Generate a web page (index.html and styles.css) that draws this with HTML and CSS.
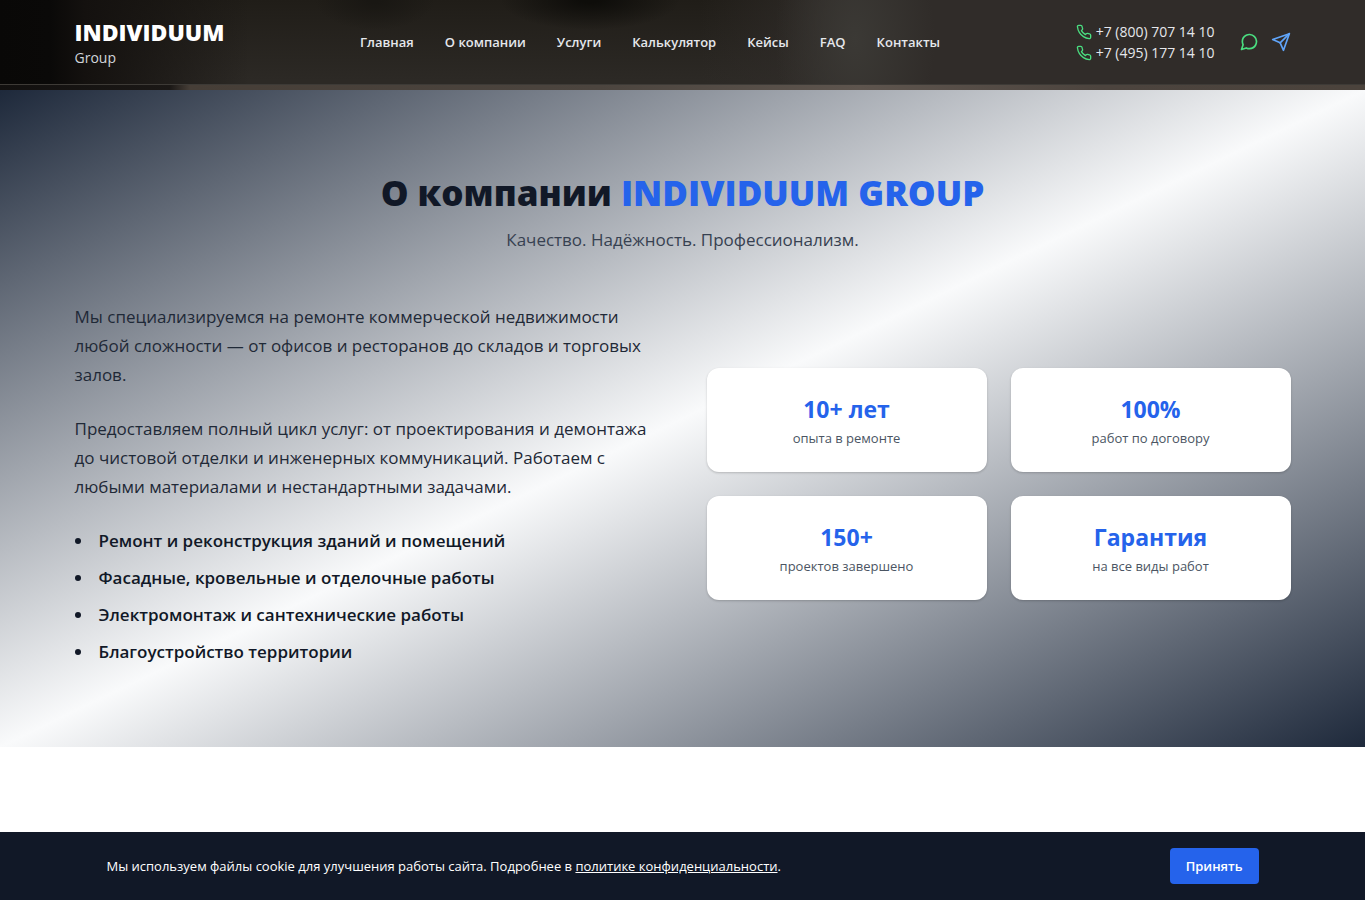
FILE: index.html
```html
<!DOCTYPE html>
<html lang="ru">
<head>
<meta charset="utf-8">
<meta name="viewport" content="width=device-width, initial-scale=1">
<title>INDIVIDUUM Group</title>
<link rel="stylesheet" href="styles.css">
</head>
<body>
<svg class="sprite" aria-hidden="true">
  <symbol id="phone" viewBox="0 0 24 24"><path d="M22 16.92v3a2 2 0 0 1-2.18 2 19.79 19.79 0 0 1-8.63-3.07 19.5 19.5 0 0 1-6-6 19.79 19.79 0 0 1-3.07-8.67A2 2 0 0 1 4.11 2h3a2 2 0 0 1 2 1.72 12.84 12.84 0 0 0 .7 2.81 2 2 0 0 1-.45 2.11L8.09 9.91a16 16 0 0 0 6 6l1.27-1.27a2 2 0 0 1 2.11-.45 12.84 12.84 0 0 0 2.81.7A2 2 0 0 1 22 16.92z"/></symbol>
</svg>
<header class="header">
  <div class="container header-row">
    <a class="logo" href="#"><span class="logo-name">INDIVIDUUM</span><span class="logo-sub">Group</span></a>
    <nav class="nav">
      <a href="#">Главная</a>
      <a href="#about">О компании</a>
      <a href="#">Услуги</a>
      <a href="#">Калькулятор</a>
      <a href="#">Кейсы</a>
      <a href="#">FAQ</a>
      <a href="#">Контакты</a>
    </nav>
    <div class="contacts">
      <div class="phones">
        <a href="tel:+78007071410"><svg class="icon-sm"><use href="#phone"/></svg>+7 (800) 707 14 10</a>
        <a href="tel:+74951771410"><svg class="icon-sm"><use href="#phone"/></svg>+7 (495) 177 14 10</a>
      </div>
      <div class="socials">
        <a class="chat" href="#" aria-label="WhatsApp"><svg class="icon" viewBox="0 0 24 24"><path d="M21 11.5a8.38 8.38 0 0 1-.9 3.8 8.5 8.5 0 0 1-7.6 4.7 8.38 8.38 0 0 1-3.8-.9L3 21l1.9-5.7a8.38 8.38 0 0 1-.9-3.8 8.5 8.5 0 0 1 4.7-7.6 8.38 8.38 0 0 1 3.8-.9h.5a8.48 8.48 0 0 1 8 8v.5z"/></svg></a>
        <a class="send" href="#" aria-label="Telegram"><svg class="icon" viewBox="0 0 24 24"><path d="m22 2-7 20-4-9-9-4Z"/><path d="M22 2 11 13"/></svg></a>
      </div>
    </div>
  </div>
</header>
<div class="hero-edge"></div>
<main>
  <section class="about" id="about">
    <div class="container">
      <h1 class="title">О компании <span>INDIVIDUUM GROUP</span></h1>
      <p class="subtitle">Качество. Надёжность. Профессионализм.</p>
      <div class="columns">
        <div class="text">
          <p>Мы специализируемся на ремонте коммерческой недвижимости любой сложности — от офисов и ресторанов до складов и торговых залов.</p>
          <p>Предоставляем полный цикл услуг: от проектирования и демонтажа до чистовой отделки и инженерных коммуникаций. Работаем с любыми материалами и нестандартными задачами.</p>
          <ul class="works">
            <li>Ремонт и реконструкция зданий и помещений</li>
            <li>Фасадные, кровельные и отделочные работы</li>
            <li>Электромонтаж и сантехнические работы</li>
            <li>Благоустройство территории</li>
          </ul>
        </div>
        <div class="cards">
          <div class="card"><strong>10+ лет</strong><span>опыта в ремонте</span></div>
          <div class="card"><strong>100%</strong><span>работ по договору</span></div>
          <div class="card"><strong>150+</strong><span>проектов завершено</span></div>
          <div class="card"><strong>Гарантия</strong><span>на все виды работ</span></div>
        </div>
      </div>
    </div>
  </section>
</main>
<div class="cookie" role="region" aria-label="Cookie">
  <div class="cookie-row">
    <p>Мы используем файлы cookie для улучшения работы сайта. Подробнее в <a href="#">политике конфиденциальности</a>.</p>
    <button type="button">Принять</button>
  </div>
</div>
</body>
</html>
```
FILE: styles.css
```css
* { box-sizing: border-box; margin: 0; padding: 0; }
body {
  font-family: "Open Sans", "Noto Sans", sans-serif;
  color: #111827;
  background: #fff;
}
a { color: inherit; text-decoration: none; }
svg { fill: none; stroke: currentColor; stroke-width: 2; stroke-linecap: round; stroke-linejoin: round; }
.sprite { position: absolute; width: 0; height: 0; }
.container { max-width: 1280px; margin: 0 auto; padding: 0 32px; }

.header {
  position: sticky;
  top: 0;
  z-index: 2;
  border-bottom: 1px solid #3d3a36;
  background:
    radial-gradient(ellipse 90px 30px at 590px 0, #0e0d0a 10%, transparent),
    radial-gradient(ellipse 60px 30px at 375px 0, #191713 10%, transparent),
    radial-gradient(ellipse 80px 140px at 855px 40px, #3b3935 0, transparent),
    linear-gradient(90deg, #090807 0, #0a0908 50px, #14110f 85px, transparent 250px),
    linear-gradient(90deg, transparent 700px, #302c29 850px),
    linear-gradient(180deg, #201d18 0, #2c2925 80px);
}
.header-row { display: flex; align-items: center; justify-content: space-between; min-height: 84px; }
.logo { display: flex; flex-direction: column; }
.logo-name { font-size: 23px; line-height: 32px; font-weight: 800; color: #fff; }
.logo-sub { font-size: 14px; line-height: 20px; color: #d1d5db; }
.nav { display: flex; gap: 31px; font-size: 13px; line-height: 20px; font-weight: 600; color: #e5e7eb; white-space: nowrap; }
.contacts { display: flex; align-items: center; gap: 24px; white-space: nowrap; }
.phones { display: flex; flex-direction: column; font-size: 14px; line-height: 21px; color: #e5e7eb; }
.phones a { display: flex; align-items: center; gap: 4px; }
.icon-sm { width: 16px; height: 16px; color: #4ade80; }
.socials { display: flex; gap: 12px; }
.socials a { display: flex; }
.icon { width: 20px; height: 20px; }
.chat { color: #4ade80; }
.send { color: #60a5fa; }

.hero-edge { height: 5px; background: linear-gradient(90deg, #12100f 0, #1b1816 170px, #463e37 190px, #4c453f 600px, #5e554e 860px, #4c443e 1100px, #4b433c); }

.about {
  padding: 80px 0 81px;
  background: linear-gradient(to bottom right, #1e293b, #f9fafb 50%, #1e293b);
}
.title { text-align: center; font-size: 35px; line-height: 45px; font-weight: 800; }
.title span { color: #2563eb; }
.subtitle { margin: 11px 0 48px; text-align: center; font-size: 17px; line-height: 28px; color: #374151; }
.columns { display: grid; grid-template-columns: 1fr 1fr; gap: 48px; align-items: center; }
.text { display: flex; flex-direction: column; gap: 25px; font-size: 17px; line-height: 29px; color: #1f2937; }
.works { display: flex; flex-direction: column; gap: 8px; list-style: disc inside; font-weight: 600; color: #111827; }
.cards { display: grid; grid-template-columns: 1fr 1fr; gap: 24px; }
.card {
  display: flex;
  flex-direction: column;
  gap: 2px;
  padding: 24px;
  border-radius: 12px;
  background: #fff;
  text-align: center;
  box-shadow: 0 1px 3px rgba(0, 0, 0, .1), 0 1px 2px rgba(0, 0, 0, .1);
}
.card strong { font-size: 23px; line-height: 34px; font-weight: 700; color: #2563eb; }
.card span { font-size: 13px; line-height: 20px; color: #4b5563; }

.cookie { position: fixed; left: 0; right: 0; bottom: 0; z-index: 3; padding: 16px; background: #111827; color: #fff; }
.cookie-row { display: flex; align-items: center; justify-content: space-between; gap: 16px; max-width: 1152px; margin: 0 auto; font-size: 13px; line-height: 20px; }
.cookie a { text-decoration: underline; }
.cookie button { padding: 8px 16px; border: 0; border-radius: 4px; background: #2563eb; color: #fff; font: 600 13px/20px "Open Sans", "Noto Sans", sans-serif; cursor: pointer; }
```
